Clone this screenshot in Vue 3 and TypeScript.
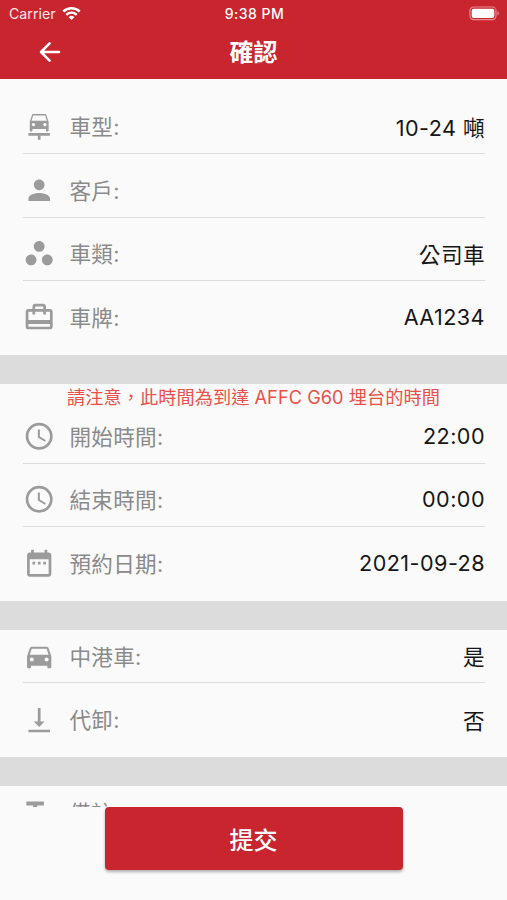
<script setup lang="ts">
interface Row {
  icon: string
  label: string
  value: string
}

interface Section {
  name: string
  notice?: string
  rows: Row[]
}

const icons: Record<string, string> = {
  carRepair:
    'M16.22 12c.68 0 1.22-.54 1.22-1.22 0-.67-.54-1.22-1.22-1.22S15 10.11 15 10.78c0 .68.55 1.22 1.22 1.22zM6.56 10.78c0 .67.54 1.22 1.22 1.22S9 11.46 9 10.78c0-.67-.54-1.22-1.22-1.22s-1.22.55-1.22 1.22zM7.61 4 6.28 8h11.43l-1.33-4H7.61zM16.28 3s.54.01.92.54c.02.02.03.04.05.07.07.11.14.24.19.4.22.65 1.56 4.68 1.56 4.68v6.5c0 .45-.35.81-.78.81h-.44c-.43 0-.78-.36-.78-.81V14H7v1.19c0 .45-.35.81-.78.81h-.44c-.43 0-.78-.36-.78-.81v-6.5S6.34 4.67 6.55 4c.05-.16.12-.28.19-.4.03-.02.04-.04.06-.06.38-.53.92-.54.92-.54h8.56zM4 17.01h16V19h-7v3h-2v-3H4v-1.99z',
  person:
    'M12 12c2.21 0 4-1.79 4-4s-1.79-4-4-4-4 1.79-4 4 1.79 4 4 4zm0 2c-2.67 0-8 1.34-8 4v2h16v-2c0-2.66-5.33-4-8-4z',
  workspaces:
    'M6 13c-2.2 0-4 1.8-4 4s1.8 4 4 4 4-1.8 4-4-1.8-4-4-4zm6-10C9.8 3 8 4.8 8 7s1.8 4 4 4 4-1.8 4-4-1.8-4-4-4zm6 10c-2.2 0-4 1.8-4 4s1.8 4 4 4 4-1.8 4-4-1.8-4-4-4z',
  cardTravel:
    'M20 6h-3V4c0-1.11-.89-2-2-2H9c-1.11 0-2 .89-2 2v2H4c-1.11 0-2 .89-2 2v11c0 1.11.89 2 2 2h16c1.11 0 2-.89 2-2V8c0-1.11-.89-2-2-2zM9 4h6v2H9V4zm11 15H4v-2h16v2zm0-5H4V8h3v2h2V8h6v2h2V8h3v6z',
  clock:
    'M11.99 2C6.47 2 2 6.48 2 12s4.47 10 9.99 10C17.52 22 22 17.52 22 12S17.52 2 11.99 2zM12 20c-4.42 0-8-3.58-8-8s3.58-8 8-8 8 3.58 8 8-3.58 8-8 8zm.5-13H11v6l5.25 3.15.75-1.23-4.5-2.67V7z',
  dateRange:
    'M9 11H7v2h2v-2zm4 0h-2v2h2v-2zm4 0h-2v2h2v-2zm2-7h-1V2h-2v2H8V2H6v2H5c-1.11 0-1.99.9-1.99 2L3 20c0 1.1.89 2 2 2h14c1.1 0 2-.9 2-2V6c0-1.1-.9-2-2-2zm0 16H5V9h14v11z',
  car:
    'M18.92 6.01C18.72 5.42 18.16 5 17.5 5h-11c-.66 0-1.21.42-1.42 1.01L3 12v8c0 .55.45 1 1 1h1c.55 0 1-.45 1-1v-1h12v1c0 .55.45 1 1 1h1c.55 0 1-.45 1-1v-8l-2.08-5.99zM6.5 16c-.83 0-1.5-.67-1.5-1.5S5.67 13 6.5 13s1.5.67 1.5 1.5S7.33 16 6.5 16zm11 0c-.83 0-1.5-.67-1.5-1.5s.67-1.5 1.5-1.5 1.5.67 1.5 1.5-.67 1.5-1.5 1.5zM5 11l1.5-4.5h11L19 11H5z',
  alignBottom: 'M16 13h-3V3h-2v10H8l4 4 4-4zM4 19v2h16v-2H4z',
  textFields: 'M2.5 4v3h5v12h3V7h5V4h-13zm19 5h-9v3h3v7h3v-7h3V9z',
}

const sections: Section[] = [
  {
    name: 'vehicle',
    rows: [
      { icon: 'carRepair', label: '車型:', value: '10-24 噸' },
      { icon: 'person', label: '客戶:', value: '' },
      { icon: 'workspaces', label: '車類:', value: '公司車' },
      { icon: 'cardTravel', label: '車牌:', value: 'AA1234' },
    ],
  },
  {
    name: 'schedule',
    notice: '請注意，此時間為到達 AFFC G60 埋台的時間',
    rows: [
      { icon: 'clock', label: '開始時間:', value: '22:00' },
      { icon: 'clock', label: '結束時間:', value: '00:00' },
      { icon: 'dateRange', label: '預約日期:', value: '2021-09-28' },
    ],
  },
  {
    name: 'options',
    rows: [
      { icon: 'car', label: '中港車:', value: '是' },
      { icon: 'alignBottom', label: '代卸:', value: '否' },
    ],
  },
  {
    name: 'remark',
    rows: [{ icon: 'textFields', label: '備註:', value: '' }],
  },
]
</script>

<template>
  <div class="screen">
    <header class="header">
      <div class="status">
        <div class="carrier">
          <span>Carrier</span>
          <svg class="wifi" viewBox="0 0 18 14" fill="none" stroke="#fff">
            <path d="M1.2 5.1a11.2 11.2 0 0 1 15.6 0" stroke-width="2.4" />
            <path d="M4.1 8.2a7 7 0 0 1 9.8 0" stroke-width="2.3" />
            <path d="M9 13.2 6.3 10.5a3.9 3.9 0 0 1 5.4 0z" fill="#fff" stroke="none" />
          </svg>
        </div>
        <span class="clock">9:38 PM</span>
        <svg class="battery" viewBox="0 0 31 15">
          <rect x="1" y="1" width="26" height="12.6" rx="3.6" fill="none" stroke="#e58b91" stroke-width="1.2" />
          <rect x="2.7" y="2.7" width="22.6" height="9.2" rx="2" fill="#fff" />
          <path d="M28.4 5.2c1.9.6 1.9 3.6 0 4.2z" fill="#e58b91" />
        </svg>
      </div>
      <div class="nav">
        <svg class="back" viewBox="0 0 22 22" fill="none" stroke="#fff" stroke-width="2.5" stroke-linecap="round" stroke-linejoin="round">
          <path d="M20 11H2.2M10.6 2.3 2 11l8.6 8.7" />
        </svg>
        <h1 class="title">確認</h1>
      </div>
    </header>

    <main class="content">
      <section v-for="section in sections" :key="section.name" class="section" :class="section.name">
        <p v-if="section.notice" class="notice">{{ section.notice }}</p>
        <div v-for="row in section.rows" :key="row.label" class="row">
          <svg class="icon" viewBox="0 0 24 24"><path :d="icons[row.icon]" /></svg>
          <span class="label">{{ row.label }}</span>
          <span class="value">{{ row.value }}</span>
        </div>
      </section>
    </main>

    <footer class="footer">
      <button class="submit" type="button">提交</button>
    </footer>
  </div>
</template>

<style>
body {
  background: #fafafa;
}
</style>

<style scoped>
.screen {
  display: flex;
  flex-direction: column;
  width: 100%;
  height: 900px;
  overflow: hidden;
  background: #fafafa;
  color: #161616;
  font-family: Inter, 'Noto Sans CJK TC', sans-serif;
}

.header {
  flex: none;
  height: 79px;
  background: #c9252f;
  color: #fff;
}

.status {
  display: grid;
  grid-template-columns: 1fr auto 1fr;
  align-items: center;
  height: 27px;
  padding: 0 7px 0 9px;
  font-size: 14.2px;
}

.carrier {
  display: flex;
  align-items: center;
  gap: 6px;
  color: #fbe6e7;
}

.wifi {
  width: 19px;
  height: 15px;
}

.clock {
  font-size: 14px;
  font-weight: 500;
  letter-spacing: 0.5px;
}

.battery {
  justify-self: end;
  width: 31px;
  height: 15px;
}

.nav {
  display: grid;
  grid-template-columns: 1fr auto 1fr;
  align-items: center;
  height: 51px;
}

.back {
  width: 22px;
  height: 22px;
  margin: 0 0 1px 39px;
}

.title {
  margin: 0;
  font-size: 24px;
  font-weight: 700;
  line-height: 51px;
}

.content {
  flex: none;
  height: 728px;
  overflow: hidden;
}

.section {
  padding-bottom: 11.5px;
  border-bottom: 29px solid #dcdcdc;
}

.vehicle {
  padding-top: 21px;
}

.notice {
  height: 25.5px;
  margin: 0;
  color: #ec5048;
  font-size: 18.2px;
  line-height: 26px;
  letter-spacing: 0.04px;
  text-align: center;
  white-space: nowrap;
}

.options {
  padding-bottom: 10.5px;
}

.row {
  display: flex;
  align-items: center;
  box-sizing: border-box;
  height: 53px;
  margin: 0 22px 0 22.5px;
  font-size: 21.6px;
}

.row:not(:last-child) {
  margin-bottom: 10.5px;
  box-shadow: 0 1px 0 #dcdcdc;
}

.options .row:first-child {
  height: 52.4px;
  margin-bottom: 11.1px;
}

.icon {
  flex: none;
  width: 32.4px;
  height: 32.4px;
  fill: #9b9b9b;
}

.label {
  margin-left: 14.5px;
  padding-bottom: 2px;
  color: #8a8a8a;
  letter-spacing: 0.3px;
}

.value {
  margin-left: auto;
  padding-bottom: 1px;
  letter-spacing: 0.45px;
}

.footer {
  display: flex;
  flex: 1;
  justify-content: center;
  align-items: flex-start;
}

.submit {
  width: 298px;
  height: 63px;
  padding: 0;
  border: 0;
  border-radius: 4px;
  background: #c9252f;
  box-shadow: 0 2px 3px rgba(0, 0, 0, 0.3);
  color: #fff;
  font-family: inherit;
  font-size: 24px;
  font-weight: 500;
}
</style>
